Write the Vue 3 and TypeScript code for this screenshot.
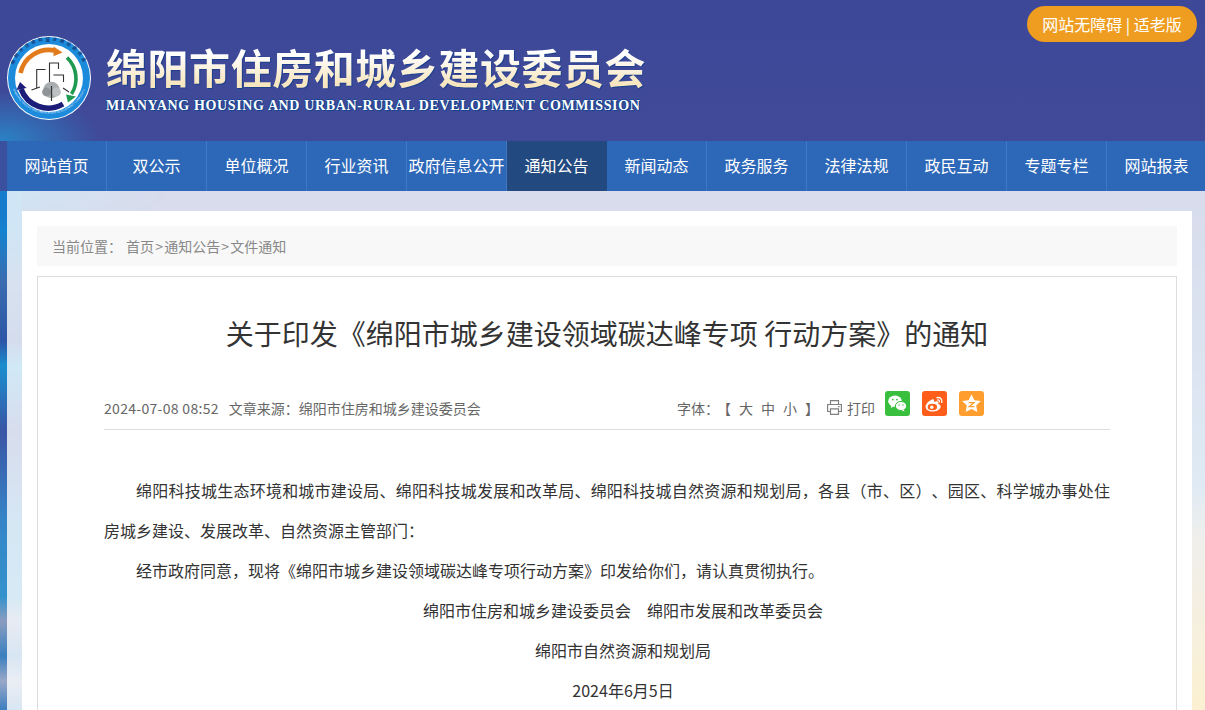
<template>
  <div class="page">
    <header class="site-header">
      <a class="care-btn">网站无障碍 | 适老版</a>
      <div class="brand">
        <svg class="logo" width="84" height="84" viewBox="0 0 84 84">
          <defs>
            <path id="ringTop" d="M4.4 48A38 38 0 1 1 79.6 48" />
            <path id="ringBottom" d="M4 46A38.6 38.6 0 0 0 80 46" />
          </defs>
          <circle cx="42" cy="42" r="42" fill="#fff" />
          <circle cx="42" cy="42" r="41" fill="#1d8bdc" />
          <circle cx="42" cy="42" r="34" fill="#fff" />
          <text class="ring-cn"><textPath href="#ringTop" startOffset="50%" text-anchor="middle">绵阳市住房和城乡建设委员会</textPath></text>
          <text class="ring-en"><textPath href="#ringBottom" startOffset="50%" text-anchor="middle">MIANYANG HOUSING AND URBAN-RURAL DEVELOPMENT COMMISSION</textPath></text>
          <path d="M13.5 37A29 29 0 0 1 48 14.6" fill="none" stroke="#e27b1b" stroke-width="4.6" />
          <path d="M46.5 10.6 55.5 16.4 46.5 20.2Z" fill="#e27b1b" />
          <path d="M60 21.5A29 29 0 0 1 64.5 58" fill="none" stroke="#1f9a50" stroke-width="3.6" />
          <path d="M59 58.5 69 60.5 61 66.5Z" fill="#1f9a50" />
          <path d="M14 53A29 29 0 0 0 56 68" fill="none" stroke="#1c1d78" stroke-width="5.4" />
          <path d="M9.5 54 13 46 19.5 52Z" fill="#1c1d78" />
          <g fill="none" stroke="#333" stroke-width="1.1">
            <path d="M29.7 52V33.5H38.5" />
            <path d="M42.5 46V27H51.5V33" />
            <path d="M46.5 39H56.5V46" />
            <path d="M24.5 54 33 51M56 52 62 56" />
          </g>
          <circle cx="44.5" cy="54" r="8.2" fill="#a9adb0" />
          <circle cx="39.5" cy="56" r="4.4" fill="#8f9497" />
          <circle cx="49.5" cy="56" r="4.4" fill="#bcc0c2" />
          <path d="M44.5 50V65" stroke="#333" stroke-width="1.2" />
        </svg>
        <div class="brand-text">
          <div class="brand-cn">绵阳市住房和城乡建设委员会</div>
          <div class="brand-en">MIANYANG HOUSING AND URBAN-RURAL DEVELOPMENT COMMISSION</div>
        </div>
      </div>
    </header>

    <nav class="main-nav">
      <a
        v-for="item in navItems"
        :key="item"
        class="nav-item"
        :class="{ active: item === activeNav }"
      >{{ item }}</a>
    </nav>

    <main class="content">
      <div class="panel">
        <div class="crumbs">
          <span class="crumbs-label">当前位置：</span>
          <span>首页<i class="sep">&gt;</i>通知公告<i class="sep">&gt;</i>文件通知</span>
        </div>

        <article class="article">
          <h1 class="article-title">关于印发《绵阳市城乡建设领域碳达峰专项 行动方案》的通知</h1>

          <div class="meta">
            <span class="meta-date">2024-07-08 08:52</span>
            <span class="meta-source">文章来源：绵阳市住房和城乡建设委员会</span>
            <div class="tools">
              <span>字体：</span>
              <span class="font-sizes">
                <span>【</span><span>大</span><span>中</span><span>小</span><span>】</span>
              </span>
              <span class="print">
                <svg width="17" height="17" viewBox="0 0 17 17" fill="none" stroke="#808080" stroke-width="1.2">
                  <path d="M4.5 5.5V1.6H12.5V5.5" />
                  <path d="M4 12.5H1.6V5.5H15.4V12.5H13" />
                  <path d="M4.5 9.8H12.5V15.4H4.5Z" />
                  <path d="M12 7.6H13.6" />
                </svg>
                打印
              </span>
              <span class="share share-wx">
                <svg width="25" height="25" viewBox="0 0 25 25">
                  <ellipse cx="10" cy="10.2" rx="6.8" ry="5.6" fill="#fff" />
                  <path d="M6.5 14 5.8 17 9 15.2Z" fill="#fff" />
                  <ellipse cx="16" cy="15" rx="5.6" ry="4.6" fill="#fff" stroke="#39bf3e" stroke-width="1" />
                  <path d="M18.6 18.6 19.6 20.6 16.6 19.2Z" fill="#fff" />
                  <circle cx="7.8" cy="8.6" r=".9" fill="#39bf3e" />
                  <circle cx="12" cy="8.6" r=".9" fill="#39bf3e" />
                  <circle cx="14" cy="14" r=".7" fill="#39bf3e" />
                  <circle cx="18" cy="14" r=".7" fill="#39bf3e" />
                </svg>
              </span>
              <span class="share share-wb">
                <svg width="25" height="25" viewBox="0 0 25 25">
                  <path d="M10 8.5C6.5 10 3.4 13.4 3.6 16C3.9 19.4 7.8 20.8 11.5 20.4C15.6 20 18.8 17.8 18.6 15.4C18.5 14 17.2 13.4 16.2 13C16.8 11.4 16.4 10.3 15 10.2C14 10.1 13 10.5 12 10.9C12.4 9.4 12 7.6 10 8.5Z" fill="#fff" />
                  <ellipse cx="10.4" cy="16" rx="4.7" ry="3.3" fill="#ff5e1a" />
                  <circle cx="9.8" cy="16.2" r="1.7" fill="#fff" />
                  <path d="M15 6.6C18.4 5.9 20.6 8.4 19.8 11.4" fill="none" stroke="#fff" stroke-width="1.4" stroke-linecap="round" />
                  <path d="M15.4 9C16.8 8.7 17.8 9.8 17.4 11" fill="none" stroke="#fff" stroke-width="1.2" stroke-linecap="round" />
                </svg>
              </span>
              <span class="share share-qz">
                <svg width="25" height="25" viewBox="0 0 25 25">
                  <path d="M12.5 3.4 15.4 9.2 21.8 10.1 17.2 14.6 18.3 21 12.5 18 6.7 21 7.8 14.6 3.2 10.1 9.6 9.2Z" fill="#fff" />
                  <path d="M9.8 11.6H15L10.4 15.6H15.4" fill="none" stroke="#ff9e2e" stroke-width="1.3" />
                </svg>
              </span>
            </div>
          </div>

          <div class="article-body">
            <p v-for="line in paragraphs" :key="line">{{ line }}</p>
          </div>
        </article>
      </div>
    </main>
  </div>
</template>

<script setup lang="ts">
const activeNav = '通知公告'

const navItems: string[] = [
  '网站首页',
  '双公示',
  '单位概况',
  '行业资讯',
  '政府信息公开',
  '通知公告',
  '新闻动态',
  '政务服务',
  '法律法规',
  '政民互动',
  '专题专栏',
  '网站报表'
]

const paragraphs: string[] = [
  '绵阳科技城生态环境和城市建设局、绵阳科技城发展和改革局、绵阳科技城自然资源和规划局，各县（市、区）、园区、科学城办事处住房城乡建设、发展改革、自然资源主管部门：',
  '经市政府同意，现将《绵阳市城乡建设领域碳达峰专项行动方案》印发给你们，请认真贯彻执行。',
  '绵阳市住房和城乡建设委员会　绵阳市发展和改革委员会',
  '绵阳市自然资源和规划局',
  '2024年6月5日'
]
</script>

<style>
html,
body {
  overflow: hidden;
  height: 710px;
}

body {
  background:
    radial-gradient(170px 40px at 0 0, rgba(20, 130, 207, .9), rgba(20, 130, 207, 0)) left 191px / 200px 40px no-repeat,
    linear-gradient(180deg, #1a6cc0 0, #1482cf 40px, #3a6cb0 90px, #2d55a6 150px, #1a8ed0 175px, #3a55a5 240px, #3585c8 330px, #3292cc 405px, #8a9cc0 430px, #3a80c0 465px, #9aa8c8 490px, #3c7fc0 519px) left 191px / 22px 519px no-repeat,
    linear-gradient(180deg, #3c50a0 0, #5f96c8 290px, #b4afa0 350px, #ebb419 519px) right 191px / 60px 519px no-repeat,
    #3c50a0;
}
</style>

<style scoped>
.page {
  width: 1205px;
  font-family: "Noto Sans CJK SC", "Liberation Sans", sans-serif;
  text-spacing-trim: space-all;
}

.site-header {
  position: relative;
  height: 141px;
  box-sizing: border-box;
  padding: 36px 0 0 7px;
  background:
    radial-gradient(100px 50px at 0 100%, #2a83c6 0, rgba(42, 131, 198, 0) 100%),
    linear-gradient(180deg, #3d4898, #404a99);
}

.care-btn {
  position: absolute;
  top: 6px;
  right: 8px;
  width: 170px;
  height: 36px;
  border-radius: 18px;
  background: #ee9d20;
  color: #fff;
  font-size: 16px;
  line-height: 36px;
  text-align: center;
}

.brand {
  display: flex;
  align-items: flex-start;
}

.logo {
  flex: none;
}

.ring-cn {
  font-size: 4.4px;
  fill: #143c7a;
  letter-spacing: 2.6px;
  font-weight: 700;
}

.ring-en {
  font-size: 2.4px;
  fill: #e4f3ff;
  letter-spacing: .25px;
}

.brand-text {
  margin-left: 15px;
  padding-top: 6px;
}

.brand-cn {
  width: 545px;
  font-size: 41px;
  font-weight: 700;
  line-height: 48px;
  letter-spacing: .55px;
  color: transparent;
  background: linear-gradient(180deg, #fff 25%, #f7e6c0 85%);
  -webkit-background-clip: text;
  background-clip: text;
  filter: drop-shadow(1px 1px 0 #1d3f8c);
}

.brand-en {
  margin-top: 6px;
  font-family: "Liberation Serif", serif;
  font-size: 14px;
  font-weight: 700;
  line-height: 20px;
  letter-spacing: .63px;
  color: #fff;
  white-space: nowrap;
  text-shadow: 1px 1px 0 #12458f, -1px 0 0 #12458f, 0 -1px 0 #12458f;
}

.main-nav {
  display: flex;
  width: 1200px;
  height: 50px;
  margin-left: 7px;
  background: #2d68b8;
}

.nav-item {
  flex: none;
  box-sizing: border-box;
  width: 100px;
  border-right: 1px solid #3f79c4;
  color: #fff;
  font-size: 16px;
  line-height: 49px;
  text-align: center;
  white-space: nowrap;
}

.nav-item.active {
  background: #234a80;
  border-right-color: #234a80;
}

.content {
  box-sizing: border-box;
  width: 1200px;
  margin-left: 7px;
  padding: 20px 15px 0;
  background: rgba(255, 255, 255, .8);
}

.panel {
  padding: 15px 15px 0;
  background: #fff;
}

.crumbs {
  display: flex;
  align-items: center;
  gap: 4px;
  height: 40px;
  padding-left: 15px;
  background: #f8f8f8;
  color: #888;
  font-size: 14px;
}

.sep {
  padding: 0 1.2px;
  font-style: normal;
}

.article {
  margin-top: 10px;
  padding: 0 66px;
  border: 1px solid #ddd;
}

.article-title {
  margin: 0;
  padding-top: 36px;
  font-size: 28px;
  font-weight: 400;
  line-height: 40px;
  color: #333;
  text-align: center;
  white-space: nowrap;
}

.meta {
  display: flex;
  align-items: center;
  height: 43px;
  margin-top: 33px;
  border-bottom: 1px solid #ddd;
  font-size: 14px;
  color: #666;
}

.meta-date {
  letter-spacing: .3px;
}

.meta-source {
  margin-left: 10px;
}

.tools {
  display: flex;
  align-items: center;
  margin-left: auto;
  margin-right: 126px;
}

.font-sizes {
  display: flex;
  gap: 8px;
  margin-left: -2px;
}

.print {
  display: flex;
  align-items: center;
  gap: 4px;
  margin-left: 7px;
}

.share {
  display: block;
  width: 25px;
  height: 25px;
  margin-left: 12px;
  margin-top: -8px;
  border-radius: 3px;
}

.share svg {
  display: block;
}

.share-wx {
  margin-left: 10px;
  background: #39bf3e;
}

.share-wb {
  background: #ff5e1a;
}

.share-qz {
  background: #ff9e2e;
}

.article-body {
  margin-top: 40px;
  font-size: 16px;
  line-height: 40px;
  color: #333;
}

.article-body p {
  margin: 0;
  text-indent: 2em;
  text-align: justify;
}

.article-body p:nth-child(n + 3) {
  text-align: center;
}
</style>
